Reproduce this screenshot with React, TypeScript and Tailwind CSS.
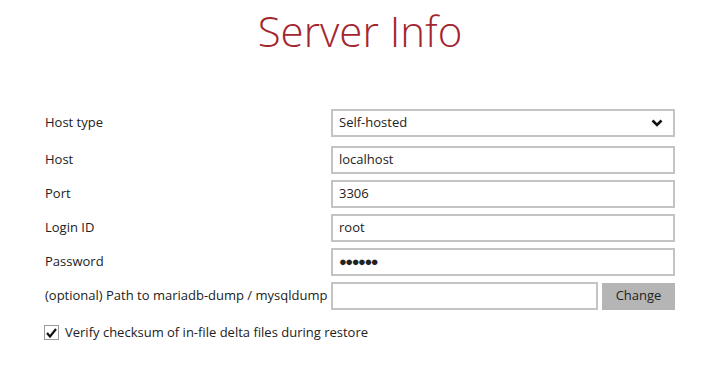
import { useState } from 'react';

const rows = [
  { label: 'Host', value: 'localhost' },
  { label: 'Port', value: '3306' },
  { label: 'Login ID', value: 'root' },
];

export default function App() {
  const [checked, setChecked] = useState(true);

  return (
    <div className="w-[720px] h-[369px] bg-white text-[#222] font-['Open_Sans',sans-serif] overflow-hidden">
      <h1 className="pt-[6px] text-center text-[42px] leading-[50px] font-light text-[#a3262f]">
        Server Info
      </h1>

      <div className="mt-[53px] px-[45px] grid grid-cols-[286px_1fr] gap-y-[6px] items-center text-[13px]">
        {/* Host type */}
        <div>Host type</div>
        <div className="h-[28px] border-2 border-[#c4c4c4] flex items-center justify-between pl-[6px] pr-[10px]">
          <span>Self-hosted</span>
          <svg width="12" height="8" viewBox="0 0 12 8">
            <polyline points="1.5,1.5 6,6 10.5,1.5" fill="none" stroke="#111" strokeWidth="2.6" />
          </svg>
        </div>

        {rows.map((r, i) => (
          <div key={r.label} className="contents">
            <div className={i === 0 ? 'mt-[3px]' : ''}>{r.label}</div>
            <div className={'h-[28px] border-2 border-[#c4c4c4] flex items-center pl-[6px]' + (i === 0 ? ' mt-[3px]' : '')}>
              {r.value}
            </div>
          </div>
        ))}

        <div>Password</div>
        <div className="h-[28px] border-2 border-[#c4c4c4] flex items-center pl-[6px] text-[13px] tracking-[-1.5px]">
          ●●●●●●
        </div>

        <div className="whitespace-nowrap">(optional) Path to mariadb-dump / mysqldump</div>
        <div className="flex items-center gap-[4px]">
          <div className="h-[28px] flex-1 border-2 border-[#c4c4c4]" />
          <button className="h-[27px] w-[73px] bg-[#b5b5b5] text-[13px] text-[#222]">Change</button>
        </div>
      </div>

      <label className="mt-[13px] ml-[44px] flex items-center gap-[6px] text-[13px] cursor-pointer">
        <span
          onClick={() => setChecked(!checked)}
          className="w-[15px] h-[15px] border border-[#9a9a9a] bg-white flex items-center justify-center"
        >
          {checked && (
            <svg width="11" height="10" viewBox="0 0 11 10">
              <polyline points="1,5 4,8.5 10,1" fill="none" stroke="#111" strokeWidth="2.2" />
            </svg>
          )}
        </span>
        <span>Verify checksum of in-file delta files during restore</span>
      </label>
    </div>
  );
}
